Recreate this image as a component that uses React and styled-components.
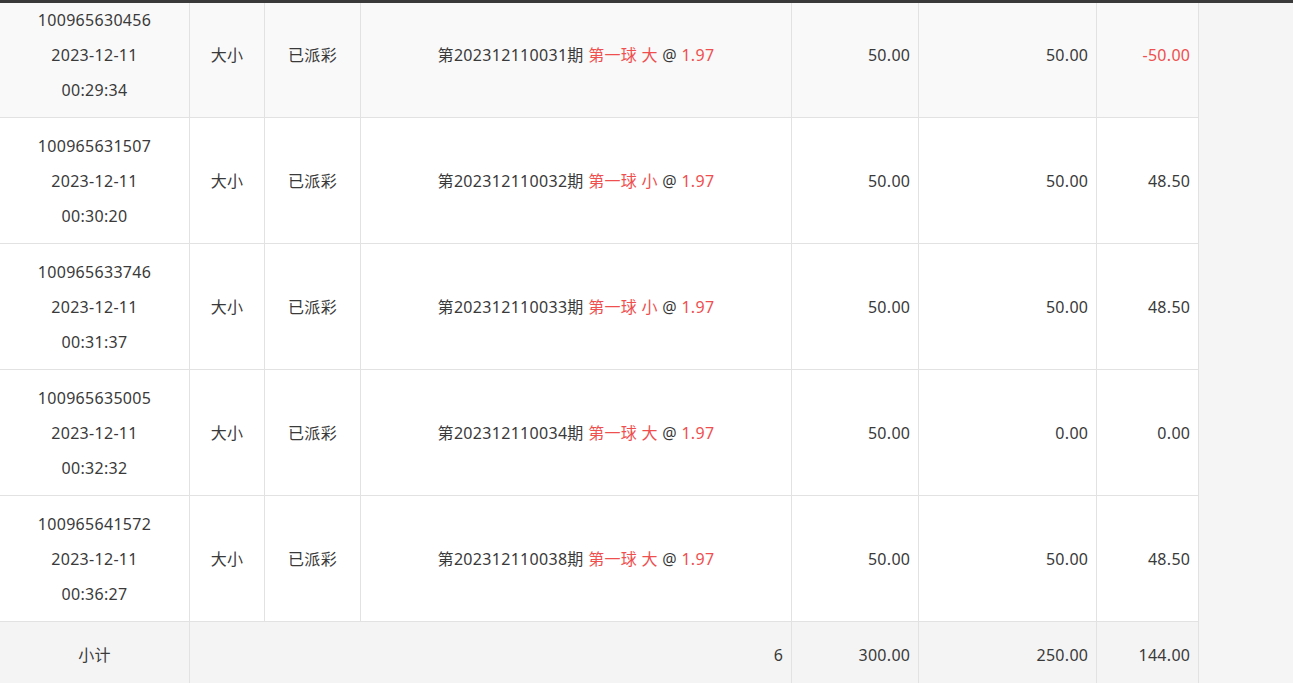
import styled, { createGlobalStyle } from "styled-components"

const GlobalStyle = createGlobalStyle`
  html, body {
    margin: 0;
    padding: 0;
    background: #f5f5f5;
  }
  body {
    font-family: "Noto Sans", "Noto Sans CJK SC", sans-serif;
    font-size: 16px;
    color: #3a3a3a;
  }
`

const rows = [
  { id: "100965630456", date: "2023-12-11", time: "00:29:34", play: "大小", status: "已派彩", issue: "202312110031", pick: "大", odds: "1.97", amount: "50.00", valid: "50.00", win: "-50.00" },
  { id: "100965631507", date: "2023-12-11", time: "00:30:20", play: "大小", status: "已派彩", issue: "202312110032", pick: "小", odds: "1.97", amount: "50.00", valid: "50.00", win: "48.50" },
  { id: "100965633746", date: "2023-12-11", time: "00:31:37", play: "大小", status: "已派彩", issue: "202312110033", pick: "小", odds: "1.97", amount: "50.00", valid: "50.00", win: "48.50" },
  { id: "100965635005", date: "2023-12-11", time: "00:32:32", play: "大小", status: "已派彩", issue: "202312110034", pick: "大", odds: "1.97", amount: "50.00", valid: "0.00", win: "0.00" },
  { id: "100965641572", date: "2023-12-11", time: "00:36:27", play: "大小", status: "已派彩", issue: "202312110038", pick: "大", odds: "1.97", amount: "50.00", valid: "50.00", win: "48.50" },
]

const widths = [190, 75, 96, 431, 127, 178, 102]

export default function App() {
  return (
    <>
      <GlobalStyle />
      <Page>
        <TopBar />
        <Table>
          <colgroup>
            {widths.map((w, i) => <col key={i} style={{ width: w }} />)}
          </colgroup>
          <tbody>
            {rows.map((r, i) => (
              <Row key={r.id} $hover={i === 0}>
                <Cell>
                  <div>{r.id}</div>
                  <div>{r.date}</div>
                  <div>{r.time}</div>
                </Cell>
                <Cell>{r.play}</Cell>
                <Cell>{r.status}</Cell>
                <Cell>
                  第{r.issue}期 <Red>第一球 {r.pick}</Red> @ <Red>{r.odds}</Red>
                </Cell>
                <Cell $align="right">{r.amount}</Cell>
                <Cell $align="right">{r.valid}</Cell>
                <Cell $align="right">
                  {r.win.startsWith("-") ? <Red>{r.win}</Red> : r.win}
                </Cell>
              </Row>
            ))}
            <TotalRow>
              <TotalCell>小计</TotalCell>
              <TotalCell colSpan={3} $align="right">6</TotalCell>
              <TotalCell $align="right">300.00</TotalCell>
              <TotalCell $align="right">250.00</TotalCell>
              <TotalCell $align="right">144.00</TotalCell>
            </TotalRow>
          </tbody>
        </Table>
      </Page>
    </>
  )
}

const Page = styled.div`
  position: relative;
  height: 683px;
  overflow: hidden;
  background: #f5f5f5;
`

// dark strip of the header above, sits over the scrolled table
const TopBar = styled.div`
  position: absolute;
  top: 0;
  left: 0;
  right: 0;
  height: 3px;
  background: #3a3a3a;
  z-index: 2;
`

const Table = styled.table`
  width: 1199px;
  table-layout: fixed;
  border-collapse: collapse;
  margin-top: -9px;
  margin-left: -1px;
`

const Row = styled.tr`
  background: ${p => (p.$hover ? "#f9f9f9" : "#fff")};
`

const Cell = styled.td`
  border: 1px solid #e2e2e2;
  padding: 11px ${p => (p.$align === "right" ? "7.7px" : "8px")} 9px 8px;
  height: 105px;
  line-height: 35px;
  letter-spacing: 0.3px;
  text-align: ${p => p.$align || "center"};
  vertical-align: middle;
  white-space: nowrap;
`

const Red = styled.span`
  color: #ef4f4f;
`

const TotalRow = styled.tr`
  background: #f4f4f4;
`

const TotalCell = styled(Cell)`
  height: 35px;
  padding-top: 16px;
  padding-bottom: 14px;
`
